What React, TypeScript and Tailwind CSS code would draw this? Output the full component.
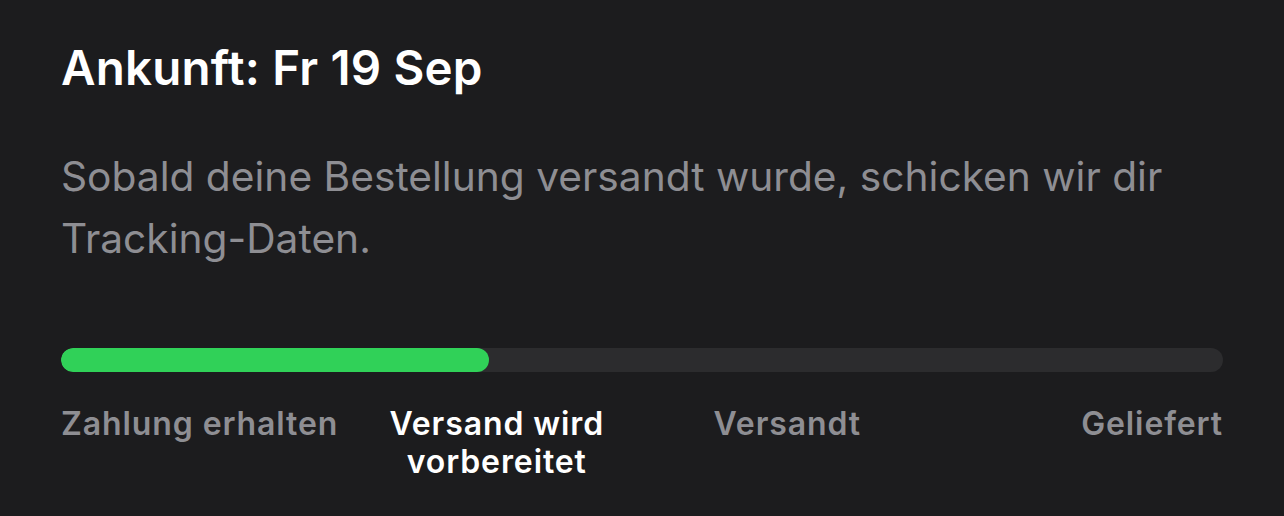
import React from "react";

export default function App() {
  const steps = [
    { label: "Zahlung erhalten", align: "text-left", active: false },
    { label: "Versand wird vorbereitet", align: "text-center", active: true },
    { label: "Versandt", align: "text-center", active: false },
    { label: "Geliefert", align: "text-right", active: false },
  ];
  return (
    <div
      className="w-[1284px] h-[516px] bg-[#1c1c1e] px-[61px] pt-[40px] overflow-hidden"
      style={{ fontFamily: "Inter, 'Noto Sans', sans-serif" }}
    >
      <h1 className="text-[47.5px] leading-[56px] font-semibold text-white tracking-[0.2px]">
        Ankunft: Fr 19 Sep
      </h1>
      <p className="mt-[50px] text-[40.7px] leading-[62px] text-[#8e8e93] w-[1150px]">
        Sobald deine Bestellung versandt wurde, schicken wir dir Tracking-Daten.
      </p>
      <div className="mt-[78px] h-[24px] w-full rounded-full bg-[#2c2c2e] overflow-hidden">
        <div className="h-full w-[428px] rounded-full bg-[#30d158]" />
      </div>
      <div className="mt-[33px] grid grid-cols-4">
        {steps.map((s) => (
          <div
            key={s.label}
            className={`${s.align} text-[32px] leading-[38px] font-semibold tracking-[0.9px] ${
              s.active ? "text-white" : "text-[#8e8e93]"
            }`}
          >
            {s.label === "Versand wird vorbereitet" ? (
              <>
                Versand wird
                <br />
                vorbereitet
              </>
            ) : (
              s.label
            )}
          </div>
        ))}
      </div>
    </div>
  );
}
